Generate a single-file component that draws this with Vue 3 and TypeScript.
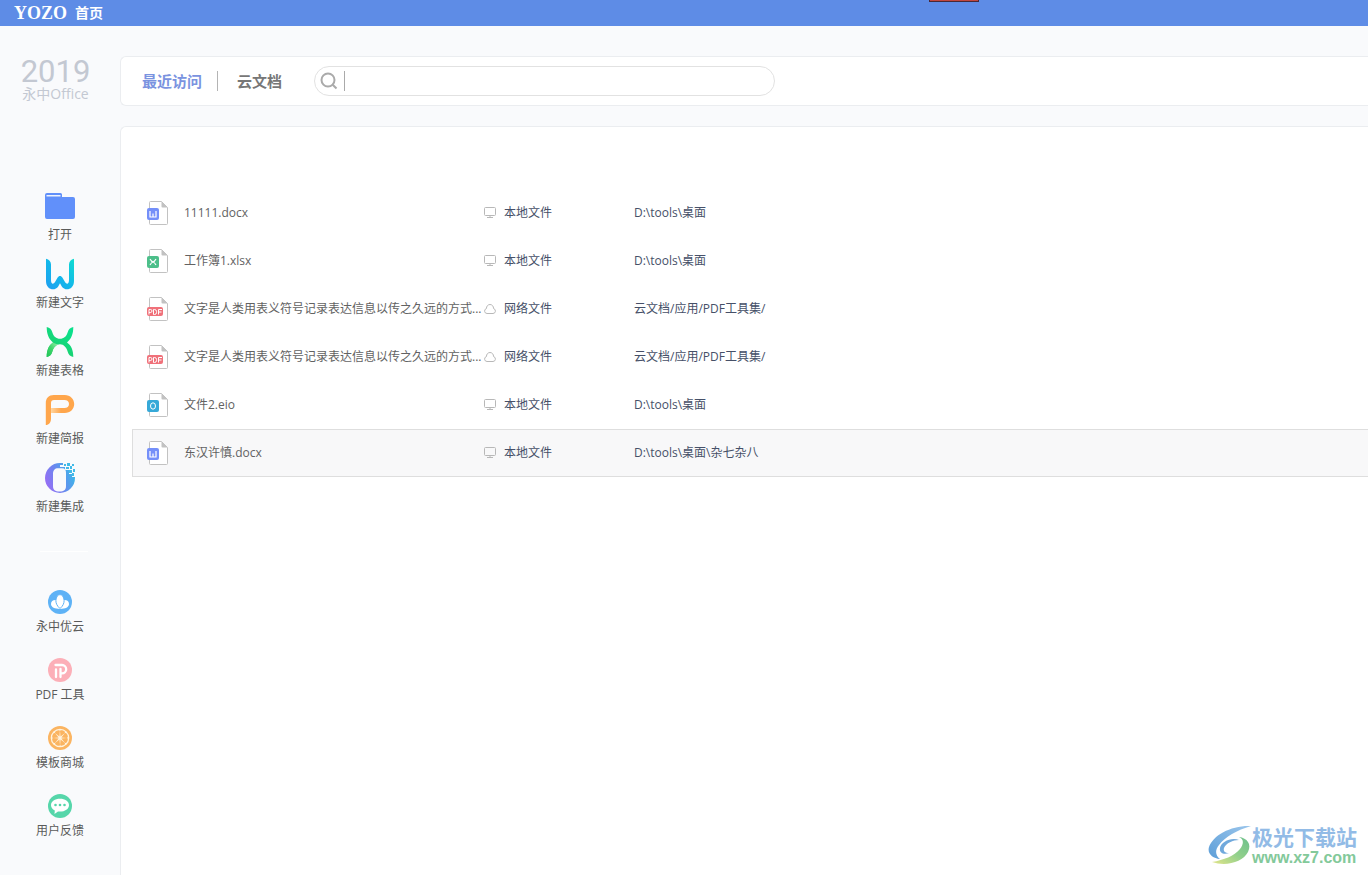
<script setup lang="ts">
import { ref } from 'vue'

type FileKind = 'word' | 'sheet' | 'pdf' | 'eio'

interface RecentFile {
  name: string
  kind: FileKind
  cloud: boolean
  path: string
  active?: boolean
}

interface SideItem {
  id: string
  label: string
}

const createItems: SideItem[] = [
  { id: 'open', label: '打开' },
  { id: 'word', label: '新建文字' },
  { id: 'sheet', label: '新建表格' },
  { id: 'slides', label: '新建简报' },
  { id: 'suite', label: '新建集成' },
]

const serviceItems: SideItem[] = [
  { id: 'cloud', label: '永中优云' },
  { id: 'pdf', label: 'PDF 工具' },
  { id: 'store', label: '模板商城' },
  { id: 'feedback', label: '用户反馈' },
]

const files: RecentFile[] = [
  { name: '11111.docx', kind: 'word', cloud: false, path: 'D:\\tools\\桌面' },
  { name: '工作簿1.xlsx', kind: 'sheet', cloud: false, path: 'D:\\tools\\桌面' },
  { name: '文字是人类用表义符号记录表达信息以传之久远的方式...', kind: 'pdf', cloud: true, path: '云文档/应用/PDF工具集/' },
  { name: '文字是人类用表义符号记录表达信息以传之久远的方式...', kind: 'pdf', cloud: true, path: '云文档/应用/PDF工具集/' },
  { name: '文件2.eio', kind: 'eio', cloud: false, path: 'D:\\tools\\桌面' },
  { name: '东汉许慎.docx', kind: 'word', cloud: false, path: 'D:\\tools\\桌面\\杂七杂八', active: true },
]

const query = ref('')
const tab = ref<'recent' | 'cloud'>('recent')
</script>

<template>
  <div class="app">
    <header class="topbar">
      <span class="brand">YOZO</span>
      <span class="home">首页</span>
      <i class="marker"></i>
    </header>

    <div class="body">
      <nav class="sidebar">
        <div class="product">
          <div class="year">2019</div>
          <div class="product-name">永中Office</div>
        </div>

        <div class="group create">
          <button v-for="item in createItems" :key="item.id" type="button" class="side-item">
            <svg v-if="item.id === 'open'" class="icon-lg" viewBox="0 0 32 32">
              <path d="M1 7V5a2 2 0 0 1 2-2h13.500a1.500 1.500 0 0 1 1.500 1.500V7h11a2 2 0 0 1 2 2v18a2 2 0 0 1-2 2H3a2 2 0 0 1-2-2z" fill="#6190fa" />
              <path d="M2.500 5h14v1.500h-14z" fill="#eef3ff" />
            </svg>
            <svg v-else-if="item.id === 'word'" class="icon-lg" viewBox="0 0 32 32">
              <defs>
                <linearGradient id="gw" x1="0" y1="1" x2="1" y2="0">
                  <stop offset="0" stop-color="#1f9df0" /><stop offset=".5" stop-color="#12b8ea" /><stop offset="1" stop-color="#10dcd0" />
                </linearGradient>
              </defs>
              <path d="M2 .8C5 1.500 7 3.500 7 6.500V22c0 4 2.200 4.800 4 2l2.500-4.300c1.400-2.200 3.600-2.200 5 0L21 24c1.800 2.800 4 2 4-2V6.500c0-3 2-5 5-5.700V23c0 9-9 10.500-12.200 5.500L16 25.300l-1.800 3.200C11 33.500 2 32 2 23z" fill="url(#gw)" />
            </svg>
            <svg v-else-if="item.id === 'sheet'" class="icon-lg" viewBox="0 0 32 32">
              <defs>
                <linearGradient id="gx" x1="0" y1="1" x2=".6" y2="0">
                  <stop offset="0" stop-color="#22c95f" /><stop offset="1" stop-color="#0be08c" />
                </linearGradient>
                <linearGradient id="gxl" x1="0" y1="1" x2="1" y2="0">
                  <stop offset="0" stop-color="#1fc356" /><stop offset=".5" stop-color="#3fd56b" /><stop offset="1" stop-color="#9cf0b0" />
                </linearGradient>
              </defs>
              <path d="M2.700 1C6 1.500 7.500 3.500 8.200 6c1.300 4.500 4 6.800 7.800 6.800S22.500 10.500 23.800 6c.7-2.500 2.200-4.500 5.500-5 0 7-2 12-6.300 15.500 4.300 3 6.300 7.500 6.300 14.500-3.300-.5-4.800-2.500-5.500-5-1.300-4.500-4-7.700-7.800-7.700S9.500 21.500 8.200 26c-.7 2.500-2.200 4.500-5.500 5 0-7 2-11.500 6.300-14.500C4.700 13 2.700 8 2.700 1z" fill="url(#gx)" />
              <path d="M2.700 31c0-7 2-11.500 6.300-14.500 1.800 1.200 3.500 1.800 5.500 2C11.200 19.200 9.300 22 8.200 26c-.7 2.500-2.200 4.500-5.500 5z" fill="url(#gxl)" />
            </svg>
            <svg v-else-if="item.id === 'slides'" class="icon-lg" viewBox="0 0 32 32">
              <defs>
                <linearGradient id="gp" x1="0" y1="0" x2="1" y2="0">
                  <stop offset="0" stop-color="#ffd5a0" /><stop offset="1" stop-color="#ffa64c" />
                </linearGradient>
              </defs>
              <path d="M1.800 31V9c0-5 3-8 8-8h11c5.500 0 9.400 4 9.400 9s-3.900 9-9.400 9H12v-5h8.500c2.700 0 4.500-1.600 4.500-4s-1.800-4-4.500-4H10c-2 0-3 1-3 3v15.500c0 4-2 6.500-5.200 6.500z" fill="#ffa64c" />
              <path d="M7 14h10v5H7z" fill="url(#gp)" />
            </svg>
            <svg v-else class="icon-lg" viewBox="0 0 32 32">
              <defs>
                <linearGradient id="go" x1="0" y1=".7" x2="1" y2=".3">
                  <stop offset="0" stop-color="#9a6cf5" /><stop offset=".45" stop-color="#6c86ef" /><stop offset="1" stop-color="#36bce8" />
                </linearGradient>
              </defs>
              <path fill-rule="evenodd" d="M16 1h3v2h-3v2h5v3h4v4h3v3h3v1a15 15 0 1 1-15-15zM9 12v12c0 4 2 5.500 6.500 5.500S22 28 22 24V11c0-3-1-4.800-4-4.800h-4c-3 0-5 2-5 5.800z" fill="url(#go)" />
              <path d="M20 2h2v2h-2zM23 1h3v3h-3zM22 5h3v2h-3zM26 4h2v3h-2zM28 2h2v2h-2zM25 8h3v3h-3zM29 7h2v3h-2zM28 11h2v3h-2z" fill="#42bae8" />
            </svg>
            <span>{{ item.label }}</span>
          </button>
        </div>

        <hr class="rule" />

        <div class="group services">
          <button v-for="item in serviceItems" :key="item.id" type="button" class="side-item">
            <svg v-if="item.id === 'cloud'" class="icon-sm" viewBox="0 0 24 24">
              <circle cx="12" cy="12" r="12" fill="#5eb2f6" />
              <path d="M7.200 10c-2.400 0-4.200 1.600-4.200 4 0 3.200 3.700 4.900 9 4.900s9-1.700 9-4.900c0-2.400-1.800-4-4.200-4z" fill="#fff" />
              <path d="M12 18.500C9 16 7.700 13 7.900 10.300 8.100 7 9.900 4.600 12 4.600s3.900 2.400 4.100 5.700C16.300 13 15 16 12 18.500z" fill="#fff" stroke="#5eb2f6" />
            </svg>
            <svg v-else-if="item.id === 'pdf'" class="icon-sm" viewBox="0 0 24 24">
              <circle cx="12" cy="12" r="12" fill="#fcafb8" />
              <path d="M7.500 7h6.500a4.200 4.200 0 0 1 0 8.400h-1.500M8 11.500v7.500M12.500 10.800v8.200" fill="none" stroke="#fff" stroke-width="2.300" stroke-linecap="round" stroke-linejoin="round" />
            </svg>
            <svg v-else-if="item.id === 'store'" class="icon-sm" viewBox="0 0 24 24">
              <circle cx="12" cy="12" r="12" fill="#fbb461" />
              <circle cx="12" cy="12" r="9.300" fill="#fff3df" />
              <g fill="#fbb461">
                <path v-for="n in 8" :key="n" :transform="`rotate(${n * 45 + 22} 12 12)`" d="M12 10.500 9.500 5.800C9 4.400 10.500 4 12 4s3 .4 2.500 1.800z" />
              </g>
            </svg>
            <svg v-else class="icon-sm" viewBox="0 0 24 24">
              <circle cx="12" cy="12" r="12" fill="#56d6aa" />
              <path d="M12 4.800c5 0 9 2.700 9 6.400s-4 6.400-9 6.400l-2-.1L6.500 20l.3-3.500C4.500 15.300 3 13.400 3 11.200c0-3.700 4-6.400 9-6.400z" fill="#fff" />
              <g fill="#56d6aa"><circle cx="7.500" cy="11" r="1.300" /><circle cx="12" cy="11" r="1.300" /><circle cx="16.500" cy="11" r="1.300" /></g>
            </svg>
            <span>{{ item.label }}</span>
          </button>
        </div>
      </nav>

      <main class="content">
        <div class="toolbar">
          <button type="button" class="tab" :class="{ selected: tab === 'recent' }" @click="tab = 'recent'">最近访问</button>
          <i class="tab-divider"></i>
          <button type="button" class="tab" :class="{ selected: tab === 'cloud' }" @click="tab = 'cloud'">云文档</button>
          <label class="search">
            <svg class="search-icon" viewBox="0 0 18 18">
              <circle cx="8" cy="8" r="6.500" /><path d="M12.700 12.700 16.500 16.500" />
            </svg>
            <input v-model="query" type="text" aria-label="搜索" />
          </label>
        </div>

        <section class="panel">
          <table class="files">
            <colgroup><col class="col-name" /><col class="col-place" /><col /></colgroup>
            <tbody>
              <tr v-for="(file, i) in files" :key="i" :class="{ active: file.active }">
                <td class="name">
                  <div class="cell">
                    <svg class="file-icon" viewBox="0 0 24 26">
                      <path d="M4.500 1.500h11l6 6v16a1 1 0 0 1-1 1h-16a1 1 0 0 1-1-1v-21a1 1 0 0 1 1-1z" fill="#fff" stroke="#c2c2c2" />
                      <path d="M15.500 1.500v5a1 1 0 0 0 1 1h5z" fill="#c2c2c2" />
                      <template v-if="file.kind === 'word'">
                        <rect x="1" y="8" width="12" height="12" rx="2" fill="#748ff9" />
                        <path d="M4 11v6h6v-6M7 13.500V17" fill="none" stroke="#fff" stroke-width="1.200" />
                      </template>
                      <template v-else-if="file.kind === 'sheet'">
                        <rect x="1" y="8" width="12" height="12" rx="2" fill="#4cbf8a" />
                        <path d="M4 11q3 5.500 6 0M4 17q3-5.500 6 0" fill="none" stroke="#fff" stroke-width="1.200" />
                      </template>
                      <template v-else-if="file.kind === 'pdf'">
                        <rect x="1" y="11" width="16" height="9" rx="2" fill="#f0717a" />
                        <path d="M3 18.500v-5h1.500a1.500 1.500 0 0 1 0 3H3M7.500 13.500v5h1a2 2 0 0 0 2-2v-1a2 2 0 0 0-2-2zM12.500 18.500v-5H16M12.500 16h3" fill="none" stroke="#fff" />
                      </template>
                      <template v-else>
                        <rect x="1" y="8" width="12" height="12" rx="2" fill="#36a9d8" />
                        <ellipse cx="7" cy="14" rx="2.500" ry="3.200" fill="none" stroke="#fff" />
                      </template>
                    </svg>
                    <span>{{ file.name }}</span>
                  </div>
                </td>
                <td>
                  <div class="cell place">
                    <svg class="place-icon" viewBox="0 0 12 12">
                      <path v-if="file.cloud" d="M3 10.500h6a2.500 2.500 0 0 0 .6-4.900C9.600 3.200 8 1.500 6 1.500S2.400 3.200 2.400 5.600A2.500 2.500 0 0 0 3 10.500z" />
                      <path v-else d="M1.500.5h9a1 1 0 0 1 1 1v6a1 1 0 0 1-1 1h-9a1 1 0 0 1-1-1v-6a1 1 0 0 1 1-1zM3 10.500h6M6 8.500v2" />
                    </svg>
                    <span>{{ file.cloud ? '网络文件' : '本地文件' }}</span>
                  </div>
                </td>
                <td>{{ file.path }}</td>
              </tr>
            </tbody>
          </table>
        </section>
      </main>
    </div>

    <div class="watermark">
      <svg class="swirl" viewBox="0 0 44 42">
        <defs>
          <linearGradient id="sb" x1="0" y1="1" x2="1" y2="0">
            <stop offset="0" stop-color="#5c9ed8" /><stop offset="1" stop-color="#9bc6ec" />
          </linearGradient>
          <linearGradient id="sg" x1="0" y1="1" x2="1" y2="0">
            <stop offset="0" stop-color="#e3e58a" /><stop offset=".5" stop-color="#92d08b" /><stop offset="1" stop-color="#6cc08c" />
          </linearGradient>
        </defs>
        <path d="M43 1C24 0 5 10 1 22c-2 7 4 11 11 12-5-4-5-9-1-14C17 12 29 5 43 1z" fill="url(#sb)" />
        <path d="M31 15c-8-3-18 2-19 8-1 5 4 7 9 5-4 0-6-2-5-5 2-5 9-8 15-8z" fill="#70a9dc" />
        <path d="M31 12c5 2 5 7 1 12-6 7-16 11-28 13 14 5 31 0 36-10 4-8-1-14-9-15z" fill="url(#sg)" />
      </svg>
      <div>
        <div class="site">极光下载站</div>
        <div class="url">www.xz7.com</div>
      </div>
    </div>
  </div>
</template>

<style>
body {
  margin: 0;
}
</style>

<style scoped>
.app {
  position: relative;
  display: flex;
  flex-direction: column;
  min-height: 100vh;
  overflow: hidden;
  background: #f9fafc;
  color: #5a5a5a;
  font: 12px/16px "Open Sans", "Noto Sans CJK SC", sans-serif;
}

button {
  padding: 0;
  border: 0;
  background: none;
  color: inherit;
  font: inherit;
  cursor: pointer;
}

.topbar {
  position: relative;
  display: flex;
  align-items: center;
  gap: 8px;
  height: 26px;
  padding-left: 14px;
  background: #5e8ce6;
  color: #fff;
}

.brand {
  font: bold 18px/24px "Liberation Serif", serif;
}

.home {
  font-size: 14px;
  font-weight: 700;
}

.marker {
  position: absolute;
  top: 0;
  right: 389px;
  width: 48px;
  height: 1px;
  border: 1px solid #4a2836;
  border-top: 0;
  background: #c0473f;
}

.body {
  display: flex;
  flex: 1;
}

.sidebar {
  display: flex;
  flex-direction: column;
  flex: none;
  width: 120px;
}

.product {
  height: 134px;
  padding-top: 30px;
  box-sizing: border-box;
  padding-right: 9px;
  color: #c3c8d2;
  text-align: center;
}

.year {
  font: 31px/32px Roboto, sans-serif;
}

.product-name {
  font-size: 14px;
  line-height: 12px;
}

.group {
  display: flex;
  flex-direction: column;
}

.create {
  gap: 15px;
  padding-top: 30px;
}

.services {
  gap: 23px;
}

.side-item {
  display: flex;
  flex-direction: column;
  align-items: center;
  gap: 5px;
}

.icon-lg {
  width: 32px;
  height: 32px;
}

.icon-sm {
  width: 24px;
  height: 24px;
}

.rule {
  width: 48px;
  height: 1px;
  margin: 36px 32px 38px 40px;
  border: 0;
  background: #fff;
}

.content {
  display: flex;
  flex: 1;
  flex-direction: column;
  gap: 20px;
  min-width: 0;
  padding-top: 30px;
}

.toolbar,
.panel {
  border: 1px solid #ebedf0;
  border-right: 0;
  background: #fff;
}

.toolbar {
  display: flex;
  align-items: center;
  height: 48px;
  padding-left: 21px;
  border-radius: 6px 0 0 6px;
}

.tab {
  color: #777;
  font-size: 15px;
  font-weight: 700;
  line-height: 20px;
}

.tab.selected {
  color: #7a93e0;
}

.tab-divider {
  width: 1px;
  height: 20px;
  margin: 0 19px 0 15px;
  background: #b4b4b4;
}

.search {
  display: flex;
  align-items: center;
  box-sizing: border-box;
  width: 461px;
  height: 30px;
  margin-left: 32px;
  padding: 0 16px 0 5px;
  border: 1px solid #e2e2e2;
  border-radius: 15px;
}

.search-icon {
  width: 18px;
  height: 18px;
  fill: none;
  stroke: #aaa;
  stroke-width: 2;
}

.search input {
  flex: 1;
  min-width: 0;
  height: 20px;
  margin-left: 6px;
  padding: 0 6px;
  border: 0;
  border-left: 1px solid #aaa;
  outline: 0;
  background: none;
  font: inherit;
}

.panel {
  flex: 1;
  padding: 62px 0 0 11px;
  border-bottom: 0;
  border-radius: 6px 0 0 0;
}

.files {
  width: 100%;
  table-layout: fixed;
  border-collapse: separate;
  border-spacing: 0;
  color: #465068;
}

.col-name {
  width: 352px;
}

.col-place {
  width: 150px;
}

td {
  box-sizing: border-box;
  height: 48px;
  padding: 0;
  border: 1px solid transparent;
  border-width: 1px 0;
  white-space: nowrap;
}

td.name {
  padding-left: 13px;
  border-left-width: 1px;
  color: #626262;
}

.active td {
  border-color: #dedede;
  background: #f8f8f9;
}

.cell {
  display: flex;
  align-items: center;
  gap: 14px;
}

.place {
  gap: 8px;
}

.file-icon {
  width: 24px;
  height: 26px;
}

.place-icon {
  width: 12px;
  height: 12px;
  fill: none;
  stroke: #b8b8b8;
}

.watermark {
  position: absolute;
  right: 11px;
  bottom: 8px;
  display: flex;
  align-items: center;
}

.swirl {
  width: 44px;
  height: 42px;
}

.site {
  color: #92bbe6;
  font-size: 21px;
  font-weight: 700;
  line-height: 24px;
}

.url {
  color: #83c99a;
  font: bold 16px/18px "Liberation Sans", sans-serif;
}
</style>
